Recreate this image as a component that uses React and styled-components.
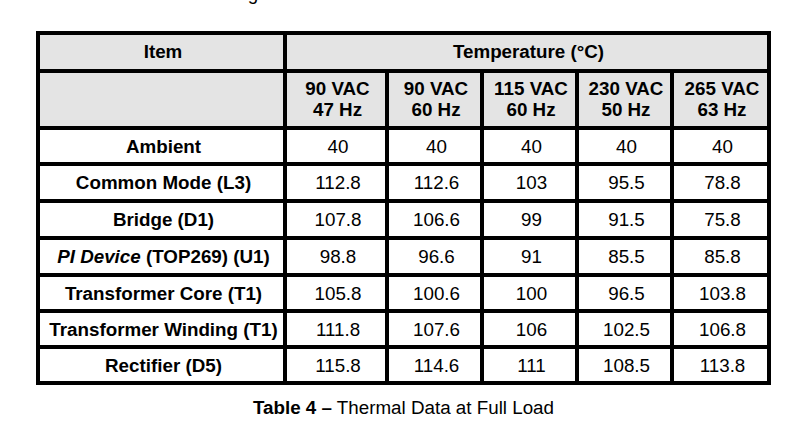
import React from "react";
import styled, { createGlobalStyle } from "styled-components";

const GlobalStyle = createGlobalStyle`
  html, body {
    margin: 0;
    padding: 0;
    background: #ffffff;
  }
  body {
    font-family: "Liberation Sans", Arial, sans-serif;
    color: #000;
    overflow: hidden;
  }
`;

const Page = styled.div`
  width: 796px;
  height: 427px;
  overflow: hidden;
  display: flex;
  flex-direction: column;
  font-family: "Liberation Sans", Arial, sans-serif;
`;

const Lead = styled.p`
  margin: -17px 0 0 125px;
  font-size: 18.8px;
  line-height: 21px;
  height: 21px;
  white-space: nowrap;
`;

const Table = styled.div`
  margin: 27px 0 0 36px;
  width: 735px;
  box-sizing: border-box;
  display: grid;
  grid-template-columns: 243px 98px 91px 91px 91px 93px;
  grid-template-rows: 34px 53px 32px 33px 33px 33px 32px 32px 32px;
  gap: 4px;
  padding: 4px;
  background: #000;
`;

const Cell = styled.div`
  display: flex;
  align-items: center;
  justify-content: center;
  text-align: center;
  box-sizing: border-box;
  padding: ${(p) => (p.$head ? "0 0 0 3px" : "2px 0 0 4px")};
  background: ${(p) => (p.$head ? "#e4e4e4" : "#ffffff")};
  font-size: 18.8px;
  line-height: 20.5px;
  font-weight: ${(p) => (p.$bold ? 700 : 400)};
  white-space: nowrap;
  grid-column: ${(p) => p.$span || "auto"};
`;

const Em = styled.i`
  font-style: italic;
`;

const Caption = styled.p`
  margin: 12px 0 0 36px;
  width: 735px;
  text-align: center;
  font-size: 18.8px;
  line-height: 21px;
  white-space: nowrap;
`;

const Strong = styled.b`
  font-weight: 700;
`;

const conditions = [
  ["90 VAC", "47 Hz"],
  ["90 VAC", "60 Hz"],
  ["115 VAC", "60 Hz"],
  ["230 VAC", "50 Hz"],
  ["265 VAC", "63 Hz"],
];

const rows = [
  { label: "Ambient", values: ["40", "40", "40", "40", "40"] },
  { label: "Common Mode (L3)", values: ["112.8", "112.6", "103", "95.5", "78.8"] },
  { label: "Bridge (D1)", values: ["107.8", "106.6", "99", "91.5", "75.8"] },
  {
    label: (
      <span>
        <Em>PI Device</Em> (TOP269) (U1)
      </span>
    ),
    values: ["98.8", "96.6", "91", "85.5", "85.8"],
  },
  { label: "Transformer Core (T1)", values: ["105.8", "100.6", "100", "96.5", "103.8"] },
  { label: "Transformer Winding (T1)", values: ["111.8", "107.6", "106", "102.5", "106.8"] },
  { label: "Rectifier (D5)", values: ["115.8", "114.6", "111", "108.5", "113.8"] },
];

export default function App() {
  return (
    <>
      <GlobalStyle />
      <Page>
        <Lead>Thermal Testing</Lead>
        <Table>
          <Cell $head $bold>Item</Cell>
          <Cell $head $bold $span="2 / -1">Temperature (°C)</Cell>
          <Cell $head />
          {conditions.map(([v, f], i) => (
            <Cell key={i} $head $bold>
              <span>
                {v}
                <br />
                {f}
              </span>
            </Cell>
          ))}
          {rows.map((r, i) => (
            <React.Fragment key={i}>
              <Cell $bold>{r.label}</Cell>
              {r.values.map((v, j) => (
                <Cell key={j}>{v}</Cell>
              ))}
            </React.Fragment>
          ))}
        </Table>
        <Caption>
          <Strong>Table 4 –</Strong> Thermal Data at Full Load
        </Caption>
      </Page>
    </>
  );
}
